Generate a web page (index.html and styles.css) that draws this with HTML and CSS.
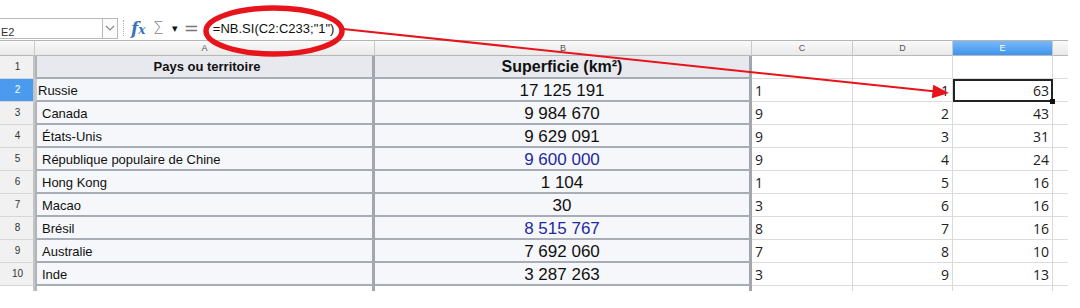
FILE: index.html
```html
<!DOCTYPE html>
<html lang="fr">
<head>
<meta charset="utf-8">
<title>Feuille</title>
<link rel="stylesheet" href="styles.css">
</head>
<body>
<div class="page">
  <div class="toolbar">
    <div class="namebox"><span class="namebox-text">E2</span></div>
    <div class="namebox-btn">
      <svg width="10" height="6" viewBox="0 0 10 6"><path d="M1 1 L5 5 L9 1" fill="none" stroke="#8a8a8a" stroke-width="1.2"/></svg>
    </div>
    <div class="sep"></div>
    <div class="fx"><span class="fx-f">f</span><span class="fx-x">x</span></div>
    <div class="sigma">&Sigma;</div>
    <div class="tri">&#9662;</div>
    <div class="eq">=</div>
    <div class="formula">=NB.SI(C2:C233;"1")</div>
  </div>

  <div class="sheet">
    <div class="ch corner"></div>
    <div class="ch">A</div>
    <div class="ch">B</div>
    <div class="ch">C</div>
    <div class="ch">D</div>
    <div class="ch ch-sel">E</div>
    <div class="ch ch-end"></div>

    <div class="rh">1</div>
    <div class="ca head">Pays ou territoire</div>
    <div class="cb head big">Superficie (km²)</div>
    <div class="cc"></div>
    <div class="cd"></div>
    <div class="ce"></div>
    <div class="cf"></div>

    <div class="rh rh-sel">2</div>
    <div class="ca first">Russie</div>
    <div class="cb">17 125 191</div>
    <div class="cc">1</div>
    <div class="cd">1</div>
    <div class="ce sel">63<span class="handle"></span></div>
    <div class="cf"></div>

    <div class="rh">3</div>
    <div class="ca">Canada</div>
    <div class="cb">9 984 670</div>
    <div class="cc">9</div>
    <div class="cd">2</div>
    <div class="ce">43</div>
    <div class="cf"></div>

    <div class="rh">4</div>
    <div class="ca">États-Unis</div>
    <div class="cb">9 629 091</div>
    <div class="cc">9</div>
    <div class="cd">3</div>
    <div class="ce">31</div>
    <div class="cf"></div>

    <div class="rh">5</div>
    <div class="ca">République populaire de Chine</div>
    <div class="cb blue">9 600 000</div>
    <div class="cc">9</div>
    <div class="cd">4</div>
    <div class="ce">24</div>
    <div class="cf"></div>

    <div class="rh">6</div>
    <div class="ca">Hong Kong</div>
    <div class="cb">1 104</div>
    <div class="cc">1</div>
    <div class="cd">5</div>
    <div class="ce">16</div>
    <div class="cf"></div>

    <div class="rh">7</div>
    <div class="ca">Macao</div>
    <div class="cb">30</div>
    <div class="cc">3</div>
    <div class="cd">6</div>
    <div class="ce">16</div>
    <div class="cf"></div>

    <div class="rh">8</div>
    <div class="ca">Brésil</div>
    <div class="cb blue">8 515 767</div>
    <div class="cc">8</div>
    <div class="cd">7</div>
    <div class="ce">16</div>
    <div class="cf"></div>

    <div class="rh">9</div>
    <div class="ca">Australie</div>
    <div class="cb">7 692 060</div>
    <div class="cc">7</div>
    <div class="cd">8</div>
    <div class="ce">10</div>
    <div class="cf"></div>

    <div class="rh">10</div>
    <div class="ca">Inde</div>
    <div class="cb">3 287 263</div>
    <div class="cc">3</div>
    <div class="cd">9</div>
    <div class="ce">13</div>
    <div class="cf"></div>

    <div class="stub stub-rh"></div>
    <div class="stub stub-a"></div>
    <div class="stub stub-b"></div>
    <div class="stub"></div>
    <div class="stub"></div>
    <div class="stub"></div>
    <div class="stub stub-f"></div>
  </div>

  <svg class="annot" width="1080" height="308" viewBox="0 0 1080 308">
    <line x1="343" y1="29" x2="936" y2="91.6" stroke="#e8141c" stroke-width="2"/>
    <polygon points="949,93 933.2,84.8 931.8,98.2" fill="#e8141c"/>
    <ellipse cx="274" cy="31" rx="68" ry="23" fill="none" stroke="#e8141c" stroke-width="5.5"/>
  </svg>
</div>
</body>
</html>
```

FILE: styles.css
```css
* { box-sizing: border-box; }
html, body { margin: 0; padding: 0; background: #ffffff; }
body { width: 1080px; height: 308px; overflow: hidden; font-family: "Liberation Sans", Arial, sans-serif; }
.page { position: relative; width: 1080px; height: 308px; padding-top: 17px; }

.toolbar { display: flex; align-items: center; height: 22px; }
.namebox { width: 103px; height: 21px; border: 1px solid #b9b9b9; border-left: none; background: #fff; overflow: hidden; position: relative; padding-left: 1px; }
.namebox-text { position: relative; top: 3px; font-size: 11px; color: #333; }
.namebox-btn { width: 15px; height: 21px; border: 1px solid #b9b9b9; border-left: none; display: flex; align-items: center; justify-content: center; background: #fbfbfb; }
.sep { width: 1px; height: 16px; margin: 0 7px 0 5px; border-left: 1px dotted #b0b0b0; }
.fx { font-family: "DejaVu Serif", serif; font-style: italic; color: #3a74b8; width: 16px; display: flex; align-items: baseline; margin-right: 6px; }
.fx-f { font-size: 17px; font-weight: bold; }
.fx-x { font-size: 12px; font-weight: bold; }
.sigma { font-family: "DejaVu Sans", sans-serif; color: #8a8a8a; font-size: 17px; font-weight: 300; margin-right: 8px; }
.tri { font-size: 11px; color: #111; margin-right: 6px; }
.eq { font-family: "DejaVu Sans", sans-serif; font-size: 18px; color: #777; margin-right: 14px; line-height: 18px; }
.formula { font-size: 13px; color: #111; padding-top: 1px; }

.sheet { display: grid; grid-template-columns: 35px 340px 377px 101px 100px 100px 15px; grid-template-rows: 16px 23px repeat(9, 23px) 5px; margin-top: 1px; }

.ch { background: linear-gradient(#fafafa, #e9e9e9); border-top: 1px solid #b5b5b5; border-right: 1px solid #c9c9c9; border-bottom: 1px solid #b8b8b8; font-size: 9px; color: #555; text-align: center; line-height: 14px; }
.ch-sel { background: linear-gradient(#79b9f7, #3f94ee); color: #fff; }
.ch-end { border-right: none; }

.rh { background: #f1f1f1; border-right: 2px solid #c4c4c4; border-bottom: 1px solid #d6d6d6; font-size: 10px; color: #333; text-align: center; line-height: 22px; padding-left: 2px; }
.rh-sel { background: #4a9bf0; color: #fff; }

.ca, .cb { background: #f6f7fa; border-bottom: 2px solid #a8adb5; color: #111; white-space: nowrap; overflow: hidden; }
.ca { border-left: 2px solid #b0b5bc; font-size: 13px; line-height: 22px; padding-left: 5px; padding-top: 1px; border-right: 3px solid #a2a7af; }
.ca.first { padding-left: 1px; border-left-color: #c8ccd2; }
.cb { font-size: 17px; line-height: 21px; text-align: center; border-right: 3px solid #a2a7af; padding-top: 1px; }
.head { background: #e8e9ee; font-weight: bold; text-align: center; }
.ca.head { font-size: 13px; padding-top: 0; }
.cb.big { font-size: 16px; padding-top: 0; }
.blue { color: #1f2a9c; }

.cc, .cd, .ce { background: #fff; border-right: 1px solid #dadada; border-bottom: 1px solid #dcdcdc; font-family: "Open Sans", "Noto Sans", sans-serif; font-size: 14px; color: #222; line-height: 22px; padding-top: 1px; }
.cc { padding-left: 3px; }
.cd, .ce { text-align: right; padding-right: 3px; }
.cf { border-bottom: 1px solid #dcdcdc; }

.sel { position: relative; border: 2px solid #222; padding-right: 2px; padding-top: 0; line-height: 19px; }
.handle { position: absolute; right: -4px; bottom: -4px; width: 5px; height: 5px; background: #111; }

.stub { border-right: 1px solid #dadada; }
.stub-rh { border-right: 2px solid #c4c4c4; }
.stub-a { border-left: 2px solid #b0b5bc; border-right: 3px solid #a2a7af; }
.stub-b { border-right: 3px solid #a2a7af; }
.stub-f { border-right: none; }

.annot { position: absolute; left: 0; top: 0; pointer-events: none; }
```
